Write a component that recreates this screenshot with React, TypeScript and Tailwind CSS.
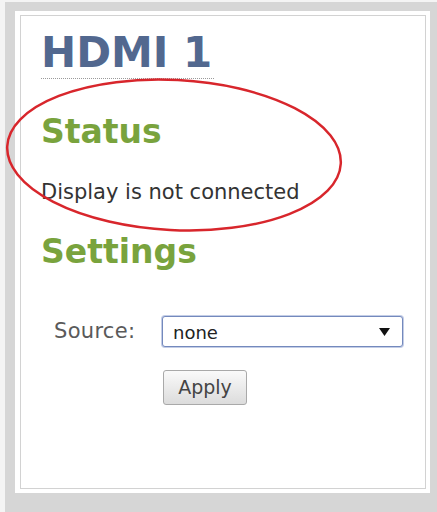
import React from 'react'

const font = { fontFamily: '"DejaVu Sans", Verdana, sans-serif' }

function Arrow(){
  return (
    <svg width="11" height="8" viewBox="0 0 11 8" className="shrink-0">
      <path d="M0 0 H11 L5.5 8 Z" fill="#111" />
    </svg>
  )
}

export default function App(){
  return (
    <div className="relative w-[437px] h-[512px] overflow-hidden bg-[#f4f4f4] pl-[5px] pt-[2px]" style={font}>
      {/* gray frame around the device panel */}
      <div className="w-[440px] h-[520px] bg-[#d6d6d6] pl-[10px] pt-[9px]">
        <div className="w-[415px] h-[482px] bg-white p-[4px] pl-[5px]">
          <div className="w-[406px] h-[474px] border border-[#d2d2d2] bg-white pl-[20px] pt-[16px]">
            <h1 className="inline-block text-[42px] leading-none font-bold text-[#52688f] pb-[4px] border-b border-dotted border-[#9a9a9a] pr-[2px]">HDMI 1</h1>

            <h2 className="mt-[36px] text-[33px] leading-none font-bold text-[#79a33d]">Status</h2>
            <p className="mt-[32px] text-[21px] leading-[24px] text-[#333]">Display is not connected</p>

            <h2 className="mt-[31px] text-[33px] leading-none font-bold text-[#79a33d]">Settings</h2>

            <div className="mt-[48px] flex items-center">
              <span className="ml-[13px] w-[108px] text-[21px] text-[#5a5a5a] tracking-[0.3px]">Source:</span>
              <div className="w-[241px] h-[31px] flex items-center justify-between rounded-[3px] border border-[#7489bd] bg-white pl-[10px] pr-[12px] shadow-[0_0_0_1px_#c3cde6]">
                <span className="text-[18px] text-[#222] pt-[2px]">none</span>
                <Arrow />
              </div>
            </div>

            <button className="ml-[122px] mt-[22px] w-[84px] h-[35px] rounded-[3px] border border-[#a9a9a9] bg-gradient-to-b from-[#fafafa] to-[#dcdcdc] text-[19px] text-[#444]" style={font}>Apply</button>
          </div>
        </div>
      </div>

      {/* red highlight ring */}
      <svg className="absolute left-0 top-0 pointer-events-none" width="437" height="512">
        <ellipse cx="174" cy="155" rx="167" ry="75" transform="rotate(3 174 155)" fill="none" stroke="#d8262c" strokeWidth="2.5" />
      </svg>
    </div>
  )
}
